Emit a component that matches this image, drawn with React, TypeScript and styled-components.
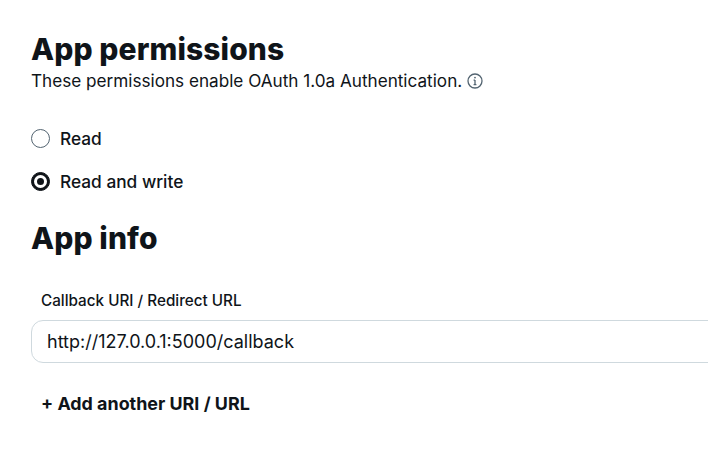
import React, { FC } from "react";
import styled, { createGlobalStyle } from "styled-components";

const GlobalStyle = createGlobalStyle`
  html, body {
    margin: 0;
    background: #fff;
  }
  body {
    font-family: Inter, "Liberation Sans", sans-serif;
    color: #0f1419;
    overflow: hidden;
  }
`;

const Page = styled.div`
  width: 708px;
  height: 470px;
  padding: 30px 0 0 31px;
  box-sizing: border-box;
  overflow: hidden;
`;

const Title = styled.h2`
  margin: 0;
  font-size: 30px;
  line-height: 38px;
  font-weight: 800;
  letter-spacing: 0.1px;
`;

const Subtitle = styled.p`
  display: flex;
  align-items: center;
  gap: 5px;
  margin: 1px 0 0;
  font-size: 17.15px;
  line-height: 24px;
`;

const InfoIcon = styled.svg`
  width: 16px;
  height: 16px;
  fill: none;
  stroke: #536471;
`;

const RadioList = styled.div`
  display: flex;
  flex-direction: column;
  gap: 19px;
  margin-top: 33px;
  margin-bottom: 26px;
`;

const RadioRow = styled.label`
  display: flex;
  align-items: center;
  gap: 10px;
  height: 24px;
  font-size: 17.3px;
  font-weight: 500;
`;

const RadioMark = styled.span<{ $checked?: boolean }>`
  width: 17px;
  height: 17px;
  border-radius: 50%;
  flex: none;
  background: ${(p) => (p.$checked ? "#0f1419" : "#fff")};
  border: 1px solid ${(p) => (p.$checked ? "#0f1419" : "#536471")};
  display: flex;
  align-items: center;
  justify-content: center;
  &::after {
    content: "";
    display: ${(p) => (p.$checked ? "block" : "none")};
    width: 13px;
    height: 13px;
    border-radius: 50%;
    box-sizing: border-box;
    border: 3px solid #fff;
    background: #0f1419;
  }
`;

const FieldLabel = styled.div`
  margin: 34px 0 0 10px;
  font-size: 15.25px;
  line-height: 20px;
  font-weight: 500;
`;

const UriInput = styled.div`
  display: flex;
  align-items: center;
  box-sizing: border-box;
  height: 43px;
  width: 700px;
  margin-top: 9px;
  padding-left: 15px;
  border: 1px solid #cfd9de;
  border-radius: 12px;
  font-size: 18px;
`;

const AddLink = styled.a`
  display: block;
  margin: 30px 0 0 10px;
  font-size: 17.9px;
  line-height: 22px;
  font-weight: 700;
`;

const App: FC = () => {
  return (
    <Page>
      <GlobalStyle />
      <Title>App permissions</Title>
      <Subtitle>
        These permissions enable OAuth 1.0a Authentication.
        <InfoIcon viewBox="0 0 16 16" strokeWidth="1.3">
          <circle cx="8" cy="8" r="7" />
          <path d="M8 7v4.6M6.6 7.2H8M6.6 11.6h2.8" />
          <circle cx="8" cy="4.6" r="0.9" fill="#536471" stroke="none" />
        </InfoIcon>
      </Subtitle>
      <RadioList>
        <RadioRow>
          <RadioMark />
          Read
        </RadioRow>
        <RadioRow>
          <RadioMark $checked />
          Read and write
        </RadioRow>
      </RadioList>
      <Title>App info</Title>
      <FieldLabel>Callback URI / Redirect URL</FieldLabel>
      <UriInput>http://127.0.0.1:5000/callback</UriInput>
      <AddLink>+ Add another URI / URL</AddLink>
    </Page>
  );
};

export default App;
